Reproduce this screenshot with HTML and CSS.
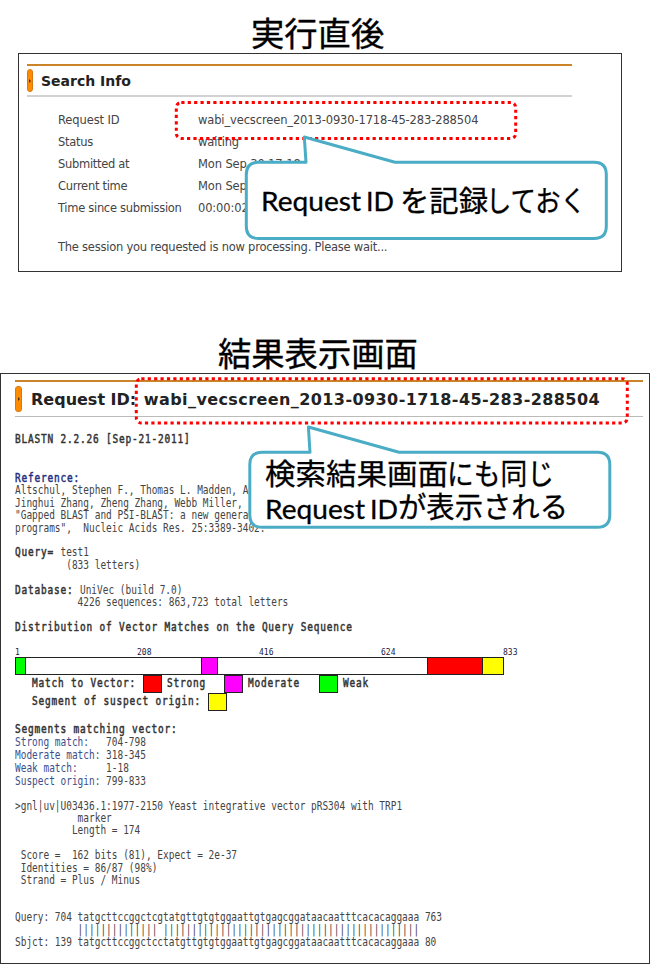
FILE: index.html
```
<!DOCTYPE html>
<html lang="ja">
<head>
<meta charset="utf-8">
<title>Request ID</title>
<link rel="stylesheet" href="styles.css">
</head>
<body>
<main class="page">
  <h1 class="title title-first">実行直後</h1>
  <section class="panel panel-search">
    <div class="bar bar-search"><span class="pill"><i></i></span><h2>Search Info</h2></div>
    <dl class="info">
      <dt>Request ID</dt><dd>wabi_vecscreen_2013-0930-1718-45-283-288504</dd>
      <dt>Status</dt><dd>waiting</dd>
      <dt>Submitted at</dt><dd>Mon Sep 30 17:18</dd>
      <dt>Current time</dt><dd>Mon Sep</dd>
      <dt>Time since submission</dt><dd>00:00:02</dd>
    </dl>
    <p class="wait">The session you requested is now processing. Please wait...</p>
  </section>

  <h1 class="title title-second">結果表示画面</h1>
  <section class="panel panel-result">
    <div class="bar bar-result"><span class="pill"><i></i></span><h2>Request ID: <span class="rid">wabi_vecscreen_2013-0930-1718-45-283-288504</span></h2></div>
<pre class="txt t-blast"><b>BLASTN 2.2.26 [Sep-21-2011]</b></pre>
<pre class="txt t-ref"><b class="navy">Reference:</b>
Altschul, Stephen F., Thomas L. Madden, A
Jinghui Zhang, Zheng Zhang, Webb Miller,
"Gapped BLAST and PSI-BLAST: a new genera
programs",  Nucleic Acids Res. 25:3389-3402.</pre>
<pre class="txt t-query"><b>Query= </b>test1
         (833 letters)

<b>Database: </b>UniVec (build 7.0)
           4226 sequences: 863,723 total letters

<b>Distribution of Vector Matches on the Query Sequence</b></pre>
    <div class="scale"><span>1</span><span>208</span><span>416</span><span>624</span><span>833</span></div>
    <div class="track"><i class="green s1"></i><i class="gap1"></i><i class="magenta s2"></i><i class="gap2"></i><i class="red s3"></i><i class="yellow s4"></i></div>
    <div class="legend">
      <span class="lt w-match"><b>Match to Vector:</b></span><i class="sw red"></i>
      <span class="lt w-strong"><b>Strong</b></span><i class="sw magenta"></i>
      <span class="lt w-mod"><b>Moderate</b></span><i class="sw green"></i>
      <span class="lt"><b>Weak</b></span>
    </div>
    <div class="legend">
      <span class="lt w-seg"><b>Segment of suspect origin:</b></span><i class="sw yellow"></i>
    </div>
<pre class="txt t-seg"><b>Segments matching vector:</b>
<span class="blue">Strong match:</span>   704-798
<span class="blue">Moderate match:</span> 318-345
<span class="blue">Weak match:</span>     1-18
<span class="blue">Suspect origin:</span> 799-833</pre>
<pre class="txt t-hit">&gt;gnl|uv|U03436.1:1977-2150 Yeast integrative vector pRS304 with TRP1
           marker
          Length = 174

 Score =  162 bits (81), Expect = 2e-37
 Identities = 86/87 (98%)
 Strand = Plus / Minus</pre>
<pre class="txt t-align">Query: 704 tatgcttccggctcgtatgttgtgtggaattgtgagcggataacaatttcacacaggaaa 763
           |||||||||||||| |||||||||||||||||||||||||||||||||||||||||||||
Sbjct: 139 tatgcttccggctcctatgttgtgtggaattgtgagcggataacaatttcacacaggaaa 80</pre>
  </section>

  <svg class="notes" width="650" height="964" viewBox="0 0 650 964">
    <rect class="dots" x="176.3" y="102.5" width="339.4" height="36" rx="5"/>
    <rect class="dots" x="136.3" y="378.7" width="491" height="44.3" rx="5"/>
    <path class="bubble" d="M258.5 162.3H306L304.3 137L395 162.3H594Q606.3 162.3 606.3 174.5V226.3Q606.3 238.5 594 238.5H258.5Q246.3 238.5 246.3 226.3V174.5Q246.3 162.3 258.5 162.3Z"/>
    <path class="bubble" d="M262 452.3H310L308.4 427L399 452.3H597.5Q609.8 452.3 609.8 464.5V515Q609.8 527.3 597.5 527.3H262Q249.8 527.3 249.8 515V464.5Q249.8 452.3 262 452.3Z"/>
    <g class="say">
      <text class="latin" x="261" y="211" textLength="100" lengthAdjust="spacingAndGlyphs">Request</text>
      <text class="latin" x="366" y="211" textLength="28" lengthAdjust="spacingAndGlyphs">ID</text>
      <text x="400" y="211.5" textLength="88" lengthAdjust="spacingAndGlyphs">を記録</text>
      <text x="486" y="211.5" textLength="100" lengthAdjust="spacingAndGlyphs">しておく</text>
      <text x="265" y="484.5" textLength="183" lengthAdjust="spacingAndGlyphs">検索結果画面</text>
      <text x="447" y="484.5" textLength="107" lengthAdjust="spacingAndGlyphs">にも同じ</text>
      <text class="latin" x="265" y="519" textLength="100" lengthAdjust="spacingAndGlyphs">Request</text>
      <text class="latin" x="370" y="519" textLength="28" lengthAdjust="spacingAndGlyphs">ID</text>
      <text x="398" y="518" textLength="170" lengthAdjust="spacingAndGlyphs">が表示される</text>
    </g>
  </svg>
</main>
</body>
</html>
```
FILE: styles.css
```
* { box-sizing: border-box; }
body { margin: 0; background: #fff; }
.page { position: relative; width: 650px; height: 964px; overflow: hidden; }
h1, h2, p, dl, dd, pre { margin: 0; }
.title { font: 400 33.3px/40px "Noto Sans CJK JP", sans-serif; color: #000; -webkit-text-stroke: .4px #000; white-space: nowrap; }
.title-first { padding: 12px 0 0 251px; height: 53px; }
.title-second { margin-top: 60px; padding-left: 218px; height: 41px; }
.panel { border: 1px solid #333; }
.panel-search { margin-left: 18px; width: 604px; height: 219px; padding: 10px 0 0 8px; }
.bar { display: flex; border-top: 2px solid #cb8428; border-bottom: 1px solid #bbb; font-family: "DejaVu Sans", sans-serif; color: #222; }
.bar h2 { font-weight: 700; white-space: nowrap; }
.bar-search { width: 545px; height: 33px; border-bottom: 2px solid #d2d2d2; }
.bar-search h2 { font-size: 14px; line-height: 31px; margin-left: 8px; }
.pill { display: flex; align-items: center; justify-content: center; width: 6px; height: 23px; margin-top: 3px; border-radius: 3px; background: #ff8c00; border: 1px solid #d97a10; }
.pill i { border: 2px solid transparent; border-left-color: #4a3010; border-right: 0; }
.info { display: grid; grid-template-columns: 140px 1fr; grid-auto-rows: 22px; padding: 12px 0 0 31px; font: 11.5px/22px "DejaVu Sans", sans-serif; letter-spacing: -.13px; color: #444; white-space: nowrap; }
.info dt { letter-spacing: -.3px; }
.info dt:first-child { letter-spacing: -.1px; }
.wait { padding: 17px 0 0 31px; font: 11.5px/22px "DejaVu Sans", sans-serif; letter-spacing: -.24px; color: #444; }
.panel-result { width: 650px; height: 591px; padding: 6px 0 0 14px; }
.bar-result { width: 628px; height: 37px; }
.bar-result .pill { width: 7px; height: 26px; margin-top: 4px; }
.bar-result h2 { font-size: 16px; line-height: 35px; margin-left: 9px; }
.rid { letter-spacing: .41px; margin-left: 2px; }
.txt, .lt { font-family: "DejaVu Sans Mono", monospace; font-size: 12px; color: #444; transform: scaleX(.788); transform-origin: 0 0; }
b { font-weight: 400; -webkit-text-stroke: .5px currentColor; letter-spacing: 1.02px; color: #333; }
.navy { color: #1f3080; }
.blue { color: #3c4f8c; }
.t-blast { margin-top: 16px; line-height: 13px; }
.t-ref { margin-top: 26px; line-height: 12.4px; }
.t-query { margin-top: 12px; line-height: 12.5px; }
.scale { display: flex; height: 9px; margin-top: 14px; font: 8px/9px "DejaVu Sans Mono", monospace; color: #221a3a; }
.scale span { flex: 0 0 122px; }
.track { display: flex; width: 489px; height: 18px; border: 1px solid #222; }
.track i { height: 16px; }
.green { background: #0f0; }
.magenta { background: #f0f; }
.red { background: #f00; }
.yellow { background: #ff0; }
.s1 { width: 10px; border-right: 1px solid #222; }
.gap1 { width: 175px; }
.s2 { width: 17px; border: solid #222; border-width: 0 1px; }
.gap2 { width: 209px; }
.s3 { width: 56px; border: solid #222; border-width: 0 1px; }
.s4 { flex: 1; }
.legend { display: flex; height: 18px; padding-left: 17px; }
.sw { flex: none; width: 19px; height: 18px; border: 1px solid #222; margin-right: 5px; }
.lt { flex: none; line-height: 17px; white-space: nowrap; }
.w-match { width: 111px; }
.w-strong { width: 57px; }
.w-mod { width: 71px; }
.w-seg { width: 176px; }
.t-seg { margin-top: 12px; line-height: 13px; }
.t-hit { margin-top: 12px; line-height: 12.4px; }
.t-align { margin-top: 25px; line-height: 12.2px; }
.notes { position: absolute; left: 0; top: 0; }
.dots { fill: none; stroke: #f00; stroke-width: 3; stroke-dasharray: 3.2 3.2; }
.bubble { fill: #fff; stroke: #4bacc6; stroke-width: 3; stroke-linejoin: round; }
.say { font: 29px "Noto Sans CJK JP", sans-serif; fill: #000; stroke: #000; stroke-width: .3; }
.latin { font: 27.5px Lato, sans-serif; }
```
